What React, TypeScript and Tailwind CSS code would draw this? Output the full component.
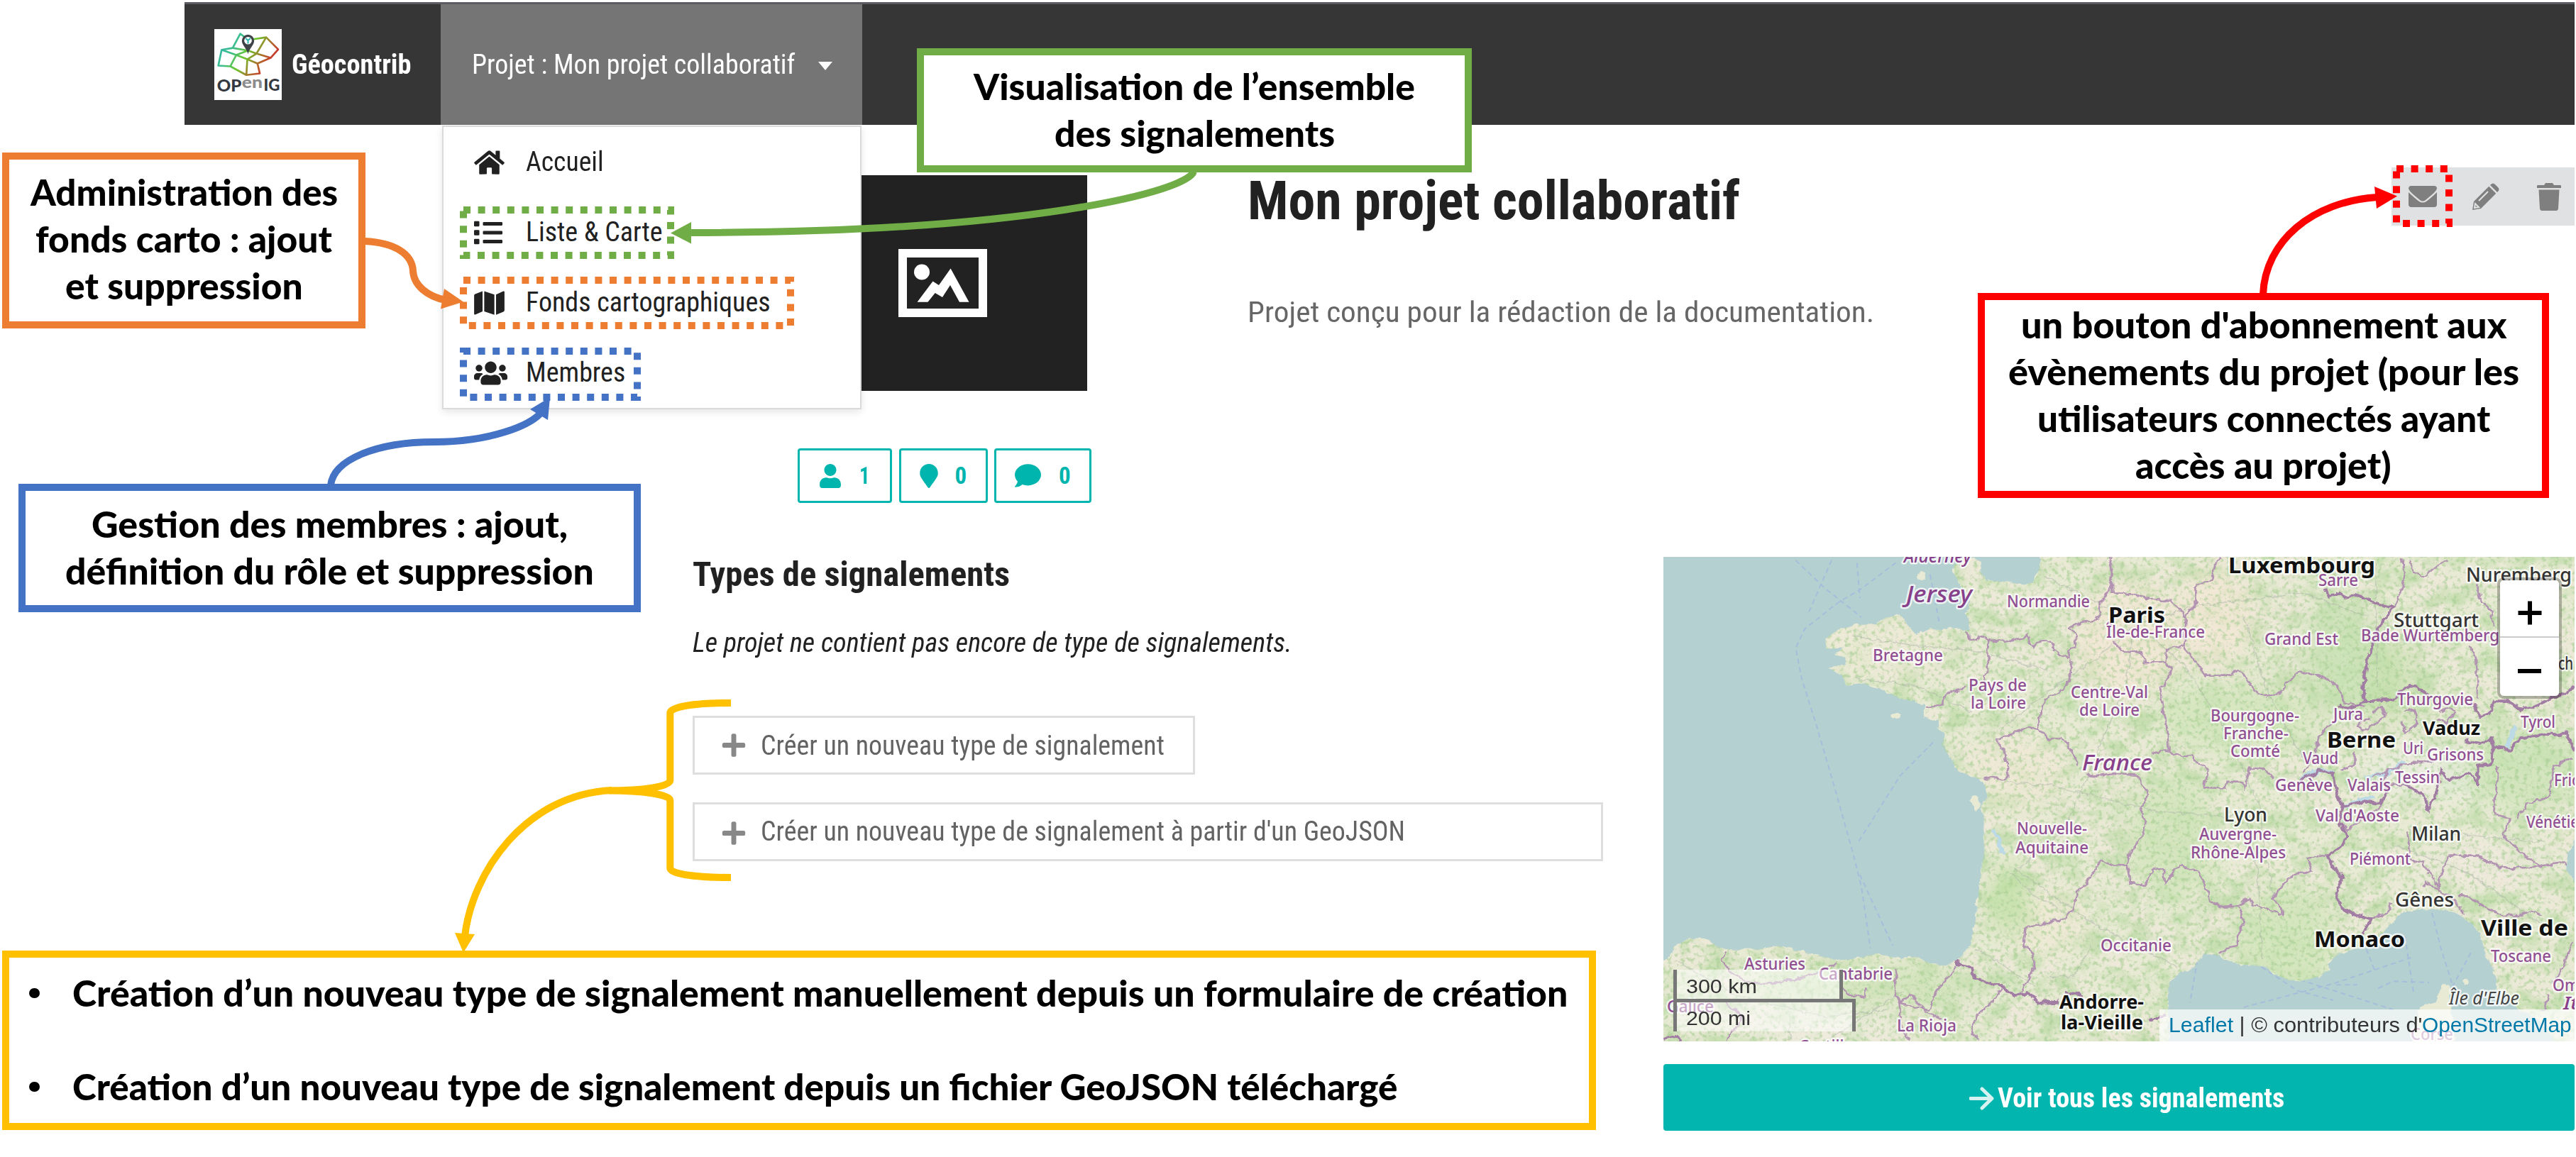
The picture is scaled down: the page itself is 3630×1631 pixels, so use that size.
import { useLayoutEffect, useRef } from "react";
import type { ReactNode } from "react";
import { FaHome, FaList, FaMap, FaUsers, FaUser, FaComment, FaPlus, FaMapMarker } from "react-icons/fa";

/** Single line of text whose glyphs are condensed horizontally to a given width. */
function Fit({ w, className = "", children }: { w: number; className?: string; children: ReactNode }) {
  const ref = useRef<HTMLSpanElement>(null);
  useLayoutEffect(() => {
    const fit = () => {
      const el = ref.current;
      if (el && el.offsetWidth) el.style.transform = `scaleX(${w / el.offsetWidth})`;
    };
    fit();
    document.fonts.ready.then(fit);
  }, [w]);
  return (
    <span className={"block shrink-0 whitespace-nowrap " + className} style={{ width: w }}>
      <span ref={ref} className="inline-block origin-left">
        {children}
      </span>
    </span>
  );
}

const MENU = [
  { Icon: FaHome, label: "Accueil", w: 110, icon: "w-[43px] h-[38px]" },
  { Icon: FaList, label: "Liste & Carte", w: 193, icon: "w-[40px] h-[40px]" },
  { Icon: FaMap, label: "Fonds cartographiques", w: 345, icon: "w-[43px] h-[38px]" },
  { Icon: FaUsers, label: "Membres", w: 140, icon: "w-[47px] h-[38px]" },
];

function Logo() {
  return (
    <svg viewBox="67 62 286 301" preserveAspectRatio="none" className="h-[100px] w-[95px] shrink-0 bg-white">
      <defs>
        <linearGradient id="lg" x1="90" y1="100" x2="300" y2="240" gradientUnits="userSpaceOnUse">
          <stop offset="0" stopColor="#2bb3b0" />
          <stop offset="0.3" stopColor="#3fbf8a" />
          <stop offset="0.52" stopColor="#6cc72e" />
          <stop offset="0.8" stopColor="#b5602a" />
          <stop offset="1" stopColor="#d3202c" />
        </linearGradient>
      </defs>
      <g fill="none" stroke="url(#lg)" strokeWidth="8" strokeLinejoin="round">
        <path d="M98 150 L145 142 L177 82 L212 108 L287 97 L338 148 L306 184 L250 208 L260 250 L203 257 L135 220 L84 217 Z" />
        <path d="M98 150 L160 172 L135 220 M160 172 L210 153 L246 166 L287 97 M246 166 L306 184 M246 166 L207 190 L160 172 M207 190 L203 257 M207 190 L250 208 M145 142 L210 153" />
      </g>
      <path d="M210 168 C205 146 184 130 184 112 A26 27 0 0 1 236 112 C236 130 215 146 210 168 Z" fill="#3f4348" />
      <circle cx="210" cy="111" r="16" fill="#fff" />
      <path d="M200 101 L210 110 L220 101 M210 110 V124" stroke="#2bb3b0" strokeWidth="6" fill="none" />
      <g fontFamily="Lato, sans-serif" fontWeight="900" fontSize="70">
        <text x="78" y="326" textLength="104" lengthAdjust="spacingAndGlyphs" fill="#34383f">OP</text>
        <text x="184" y="312" textLength="88" lengthAdjust="spacingAndGlyphs" fill="#8b8b8b">en</text>
        <text x="276" y="325" textLength="69" lengthAdjust="spacingAndGlyphs" fill="#34383f">IG</text>
      </g>
    </svg>
  );
}

const LAND =
  "M1325 30 L1312 110 L1296 150 L1270 165 L1200 150 L1140 145 L1122 110 L1118 65 L1090 50 L1050 58 L1030 80 L1032 120 L1058 180 L1085 230 L1070 290 L1085 352 L1060 358 L1020 342 L990 358 L950 348 L905 378 L875 335 L850 292 L800 302 L770 330 L700 333 L640 355 L600 390 L602 435 L660 428 L632 460 L665 470 L670 500 L610 515 L655 545 L670 592 L710 575 L780 600 L850 645 L935 665 L928 720 L985 737 L975 768 L1002 795 L987 840 L1020 900 L1042 950 L1130 992 L1142 1060 L1120 1100 L1130 1160 L1130 1290 L1116 1430 L1105 1560 L1085 1690 L1050 1740 L1000 1775 L950 1765 L900 1735 L850 1748 L770 1722 L700 1745 L640 1752 L560 1725 L500 1710 L440 1690 L380 1702 L270 1705 L235 1692 L205 1662 L140 1660 L88 1700 L80 1740 L50 1757 L50 2110 L1749 2110 L1746 1900 L1752 1840 L1790 1800 L1835 1782 L1862 1728 L1892 1720 L1930 1745 L1990 1768 L2075 1778 L2090 1800 L2150 1835 L2200 1838 L2250 1820 L2285 1795 L2280 1760 L2330 1718 L2440 1670 L2490 1600 L2530 1550 L2600 1533 L2700 1543 L2768 1600 L2795 1650 L2808 1720 L2842 1810 L2850 1880 L2890 1900 L2920 1960 L2990 2000 L3050 2110 L3120 2110 L3120 1440 L3080 1370 L3085 1300 L3120 1210 L3120 30 Z";

const BORDERS =
  "M1072 358 L1085 395 L1105 402 L1115 383 L1140 390 L1200 405 L1250 390 L1275 378 L1295 425 L1330 400 L1355 405 L1365 440 L1390 460 L1415 478 M1143 390 L1145 530 L1130 540 L1128 570 M1070 590 L1055 610 L1000 625 L990 665 L940 680 M1552 46 L1560 120 L1550 190 L1520 240 L1520 290 L1500 315 L1460 320 L1420 345 L1440 380 L1435 430 L1412 440 L1418 480 M1425 485 L1415 570 L1385 620 L1335 645 L1325 700 L1308 765 L1250 780 L1215 800 L1172 812 L1200 880 L1215 970 L1200 990 L1150 978 L1135 990 M1308 765 L1350 820 L1390 805 L1430 880 L1445 925 M1470 965 L1500 970 L1560 962 M1556 60 L1560 200 L1600 200 L1700 225 L1760 230 L1805 300 L1840 240 L1840 170 L1890 140 L1905 80 L1925 50 M1805 300 L1800 420 L1740 435 L1735 490 L1670 490 L1655 450 L1590 440 L1565 400 M1800 425 L1830 470 L1870 545 L1950 545 L1980 525 L2010 560 L2030 610 L2075 640 L2130 615 L2140 580 L2190 530 L2270 555 L2320 600 L2335 660 L2400 680 M1735 490 L1755 520 L1740 590 L1720 600 L1730 700 L1745 780 L1748 865 L1800 890 L1830 880 L1850 920 L1880 950 L1870 1020 L1940 1025 L1945 995 L1995 1000 L2000 1025 L2020 935 L2065 940 L2100 990 M1748 865 L1690 880 M1560 960 L1640 965 L1680 1050 L1655 1110 L1670 1160 L1660 1230 L1620 1290 L1610 1345 M1520 1325 L1560 1345 L1610 1350 L1620 1430 L1670 1430 L1700 1360 L1730 1370 L1735 1430 L1770 1370 L1790 1350 L1850 1380 L1870 1430 L1890 1500 L1920 1525 L1980 1520 L2005 1590 L1980 1640 L1975 1690 L1940 1700 L1920 1730 M1980 1520 L2000 1500 L2020 1490 L2030 1515 L2060 1530 L2130 1560 L2130 1530 L2095 1490 L2130 1430 L2170 1390 L2230 1370 L2210 1320 L2280 1305 M2530 46 L2540 120 L2525 200 L2500 260 M2550 60 L2570 110 L2600 130 L2630 100 L2680 60 M2780 160 L2790 220 L2830 280 L2840 340 M2760 420 L2780 500 L2785 640 M2300 740 L2250 810 L2240 880 L2200 960 M2480 950 L2460 1010 L2545 1010 M2430 700 L2460 680 L2475 720 L2440 750 L2400 780 L2380 760 L2420 730 M2540 700 L2570 690 L2580 750 L2540 790 L2530 740 M2650 700 L2690 680 L2710 700 L2680 750 L2650 730 M2370 870 L2370 920 L2330 950 M2430 980 L2480 950 L2540 920 L2600 915 L2640 900 M2545 1210 L2560 1330 L2600 1340 L2650 1440 L2670 1350 L2690 1310 L2780 1310 L2860 1360 L2960 1360 L3000 1350 L3060 1340 L3108 1350 M2850 930 L2840 1130 L2890 1150 L2870 1220 L2920 1290 L3000 1360 M2600 1440 L2610 1420 L2650 1450 L2700 1490 L2740 1560 M2720 1480 L2750 1480 L2800 1520 L2860 1560 L2920 1560 L2960 1545 L3000 1560 M3100 900 L3040 930 L3020 1060 L2950 1090 L2920 1150 M2430 1570 L2480 1550 L2490 1510 M3100 1680 L3070 1770 L3040 1850 M3020 1900 L3010 1960 L2990 1960 M1250 1890 L1300 1780 L1295 1720 L1265 1690 L1270 1610 L1400 1580 L1430 1540 L1440 1470 L1500 1380 L1520 1325 M1040 1770 L1000 1840 L970 1880 L950 1960 L900 1950 L850 1930 L880 1900 L920 1940 L940 1970 L990 2000 M840 1790 L830 1880 L850 1930 L850 2010 L880 2090 M1190 1870 L1160 1920 L1110 1980 L1090 2050 L1110 2090 M265 1715 L250 1750 L290 1810 L340 1845 L430 1850 L560 1810 L640 1760 M270 1930 L320 1990 L270 2090 M650 1860 L690 1905 L735 1900 L735 1870 M2320 1160 L2345 1200 L2400 1150 L2460 1100";

const STRONG_BORDERS =
  "M2275 180 L2285 210 L2320 200 L2340 215 L2390 205 L2420 235 L2500 260 L2450 350 L2430 420 L2410 500 L2400 600 L2410 655 L2350 690 L2320 670 M2410 655 L2500 650 L2530 610 L2560 590 L2590 610 L2620 630 M2720 640 L2760 650 L2790 720 L2830 700 L2840 655 L2880 655 L2930 690 L2990 670 L3020 650 L3108 600 M2190 990 L2250 950 L2300 960 L2310 1040 L2330 1100 L2400 1080 L2460 1090 L2480 1020 M2545 1010 L2600 1050 L2620 1115 L2650 1020 L2660 950 L2690 985 L2760 960 L2785 1010 L2780 930 L2830 920 L2835 850 L2890 860 L2930 810 L3000 800 L3080 790 L3108 860 M2740 820 L2790 840 L2830 815 L2835 850 M2330 1100 L2320 1160 L2345 1230 L2330 1270 L2280 1310 L2300 1360 L2330 1400 L2310 1470 L2320 1520 L2370 1560 L2430 1570 L2400 1635 M1035 1750 L1050 1770 L1090 1780 L1100 1830 L1190 1860 L1230 1900 L1280 1890 L1310 1930 L1380 1925 M1400 1885 L1460 1900 M1680 2010 L1740 1985 M58 2085 L100 2070 L118 2090";

const ROADS =
  "M1640 330 L1500 480 L1340 620 L1180 780 M1640 330 L1800 500 L1950 800 L2050 1100 L2100 1500 M1640 330 L1850 250 L2200 200 L2420 300 M1640 330 L1450 200 L1330 130 M1640 330 L1600 600 L1500 900 L1400 1200 L1240 1370 M1200 1000 L1350 1010 L1700 1120 L2010 1150 M1240 1370 L1500 1600 L1780 1780 M2010 1150 L2050 1400 L2060 1750 M690 380 L900 420 L1100 440 L1340 520 M700 560 L900 590 L1090 700 M1220 1380 L1300 1480 L1420 1560 M1100 1700 L1300 1860 M2440 60 L2450 600 M2500 400 L2900 380 M2500 1260 L2750 1380 L3000 1600 M2550 1200 L3000 1250 M100 1750 L300 1900 L600 1990 L800 1960 M480 1980 L480 2090 M620 2080 L860 1880 M1490 1690 L1430 1820 L1350 1820 M2000 300 L2080 620 L2200 900";

const FERRY =
  "M835 70 L720 180 L640 240 L530 350 L500 430 L520 560 L570 760 L630 1020 L690 1290 L720 1440 L750 1700 M715 1390 L770 1540 L825 1690 M500 60 L600 180 L720 300 M620 60 L540 290 M705 70 L715 220 M950 120 L980 320 M960 830 L850 970 L710 1250 M2630 1550 L2660 1700 L2700 1860 M1845 1750 L1820 1930 M2400 1670 L2440 1800 M2060 1780 L2180 1880 L2300 1920 M2310 1855 L2380 1855 M2450 1870 L2500 1840 L2620 1845 M2760 1720 L2700 1860 M2080 1790 L2500 1960 M2000 1950 L2300 1850 L2560 1740 M2540 1650 L2570 1900";

type Label = [string, number, number, number, number, string];
const P = "fill-[#914f93] font-medium";
const PI = "fill-[#87408a] italic font-medium";
const B = "fill-[#111] font-bold";
const C = "fill-[#333] font-medium";
const LABELS: Label[] = [
  ["Alderney", 2683, 793, 95, 26, PI],
  ["Jersey", 2686, 849, 93, 33, PI],
  ["Normandie", 2828, 856, 117, 23, P],
  ["Bretagne", 2639, 932, 99, 23, P],
  ["Pays de", 2774, 974, 82, 23, P],
  ["la Loire", 2777, 999, 78, 23, P],
  ["Centre-Val", 2918, 984, 109, 23, P],
  ["de Loire", 2930, 1009, 85, 23, P],
  ["France", 2934, 1086, 99, 30, PI],
  ["Île-de-France", 2968, 899, 139, 23, P],
  ["Paris", 2971, 878, 80, 30, B],
  ["Luxembourg", 3140, 808, 207, 30, B],
  ["Sarre", 3267, 826, 56, 23, P],
  ["Nuremberg", 3475, 820, 149, 27, C],
  ["Stuttgart", 3373, 884, 120, 27, C],
  ["Bade Wurtemberg", 3327, 904, 195, 23, P],
  ["Grand Est", 3191, 909, 104, 23, P],
  ["ch", 3605, 944, 21, 26, C],
  ["Thurgovie", 3378, 994, 107, 23, P],
  ["Jura", 3288, 1015, 42, 23, P],
  ["Bourgogne-", 3115, 1017, 125, 23, P],
  ["Franche-", 3133, 1042, 92, 23, P],
  ["Comté", 3143, 1067, 70, 23, P],
  ["Berne", 3279, 1054, 97, 30, B],
  ["Vaduz", 3414, 1036, 81, 26, B],
  ["Tyrol", 3552, 1026, 49, 23, P],
  ["Uri", 3386, 1063, 29, 23, P],
  ["Grisons", 3420, 1072, 80, 23, P],
  ["Vaud", 3245, 1077, 50, 23, P],
  ["Tessin", 3375, 1104, 63, 23, P],
  ["Genève", 3206, 1115, 81, 23, P],
  ["Valais", 3308, 1115, 61, 23, P],
  ["Frioul", 3599, 1108, 56, 23, P],
  ["Lyon", 3134, 1158, 61, 27, C],
  ["Val d'Aoste", 3263, 1158, 118, 23, P],
  ["Milan", 3398, 1185, 70, 27, C],
  ["Vénétie", 3560, 1167, 74, 23, P],
  ["Auvergne-", 3099, 1184, 109, 23, P],
  ["Rhône-Alpes", 3087, 1210, 134, 23, P],
  ["Piémont", 3311, 1219, 86, 23, P],
  ["Nouvelle-", 2842, 1176, 99, 23, P],
  ["Aquitaine", 2840, 1203, 103, 23, P],
  ["Gênes", 3375, 1278, 83, 27, C],
  ["Monaco", 3261, 1335, 128, 30, B],
  ["Ville de", 3496, 1319, 123, 30, B],
  ["Toscane", 3510, 1356, 85, 23, P],
  ["Île d'Elbe", 3451, 1416, 99, 25, "fill-[#444] italic"],
  ["Ombrie", 3597, 1397, 78, 23, P],
  ["Italia", 3612, 1423, 72, 26, PI],
  ["Occitanie", 2960, 1341, 100, 23, P],
  ["Andorre-", 2902, 1422, 119, 26, B],
  ["la-Vieille", 2904, 1451, 116, 26, B],
  ["Asturies", 2458, 1367, 86, 23, P],
  ["Cantabrie", 2563, 1381, 104, 23, P],
  ["Galice", 2349, 1427, 66, 23, P],
  ["La Rioja", 2673, 1454, 84, 23, P],
  ["Castille", 2535, 1483, 76, 23, P],
  ["Corse", 3397, 1466, 60, 23, P],
];

function FranceMap() {
  return (
    <svg viewBox="2344 785 1284 683" className="block h-[683px] w-[1284px]">
      <defs>
        <clipPath id="land">
          <path d={LAND} transform="translate(2320 770) scale(.4209 .3333)" />
        </clipPath>
        <filter id="rough" x="-5%" y="-5%" width="110%" height="110%">
          <feTurbulence type="fractalNoise" baseFrequency="0.09" numOctaves="3" seed="4" />
          <feDisplacementMap in="SourceGraphic" scale="9" xChannelSelector="R" yChannelSelector="G" />
        </filter>
        <filter id="forest" x="0" y="0" width="100%" height="100%" colorInterpolationFilters="sRGB">
          <feTurbulence type="fractalNoise" baseFrequency="0.03 0.035" numOctaves="6" seed="11" />
          <feColorMatrix values="0 0 0 0 0.68  0 0 0 0 0.84  0 0 0 0 0.59  3.4 0 0 0 -1.5" />
        </filter>
        <filter id="fields" x="0" y="0" width="100%" height="100%" colorInterpolationFilters="sRGB">
          <feTurbulence type="fractalNoise" baseFrequency="0.16" numOctaves="4" seed="23" />
          <feColorMatrix values="0 0 0 0 0.64  0 0 0 0 0.8  0 0 0 0 0.56  0 4 0 0 -2" />
        </filter>
        <filter id="plains" x="0" y="0" width="100%" height="100%" colorInterpolationFilters="sRGB">
          <feTurbulence type="fractalNoise" baseFrequency="0.02" numOctaves="5" seed="31" />
          <feColorMatrix values="0 0 0 0 0.95  0 0 0 0 0.91  0 0 0 0 0.87  0 0 4 0 -1.7" />
        </filter>
        <filter id="soft" x="-50%" y="-50%" width="200%" height="200%">
          <feGaussianBlur stdDeviation="16" />
        </filter>
      </defs>
      <rect x="2344" y="785" width="1284" height="683" fill="#b5d0d0" />
      <g transform="translate(2320 770) scale(.4209 .3333)">
        <path d={FERRY} fill="none" stroke="#a2b8dd" strokeWidth="2" strokeDasharray="7 5" strokeOpacity=".8" vectorEffect="non-scaling-stroke" />
      </g>
      <g filter="url(#rough)">
        <path d={LAND} transform="translate(2320 770) scale(.4209 .3333)" fill="#e8ead4" />
        <g fill="#e8ead4">
          <ellipse cx="2671" cy="1009" rx="7" ry="5" />
          <ellipse cx="2708" cy="811" rx="6" ry="5" />
          <ellipse cx="2784" cy="1131" rx="6" ry="10" />
          <path d="M3408 1422 L3434 1412 L3441 1388 L3450 1386 L3453 1412 L3460 1468 L3400 1468 Z" />
          <ellipse cx="3474" cy="1384" rx="4" ry="4" />
        </g>
      </g>
      <g clipPath="url(#land)">
        <rect x="2344" y="785" width="1284" height="683" filter="url(#plains)" opacity=".5" />
        <rect x="2344" y="785" width="1284" height="683" filter="url(#forest)" opacity=".55" />
        <g filter="url(#soft)" opacity=".75">
          <ellipse cx="3000" cy="900" rx="75" ry="80" fill="#f3e6d4" />
          <ellipse cx="3120" cy="870" rx="55" ry="70" fill="#f3e6d4" />
          <ellipse cx="2880" cy="1300" rx="60" ry="45" fill="#f0e9d5" />
          <ellipse cx="2840" cy="1090" rx="70" ry="50" fill="#f0e8d6" />
          <ellipse cx="2660" cy="910" rx="90" ry="50" fill="#efead8" />
          <ellipse cx="3500" cy="1215" rx="110" ry="30" fill="#f1eae0" />
          <ellipse cx="3470" cy="1090" rx="150" ry="35" fill="#edeee4" />
          <ellipse cx="2830" cy="1270" rx="30" ry="50" fill="#bfe0a3" />
          <ellipse cx="3060" cy="1180" rx="60" ry="90" fill="#cfe4b8" />
          <ellipse cx="3300" cy="930" rx="50" ry="90" fill="#c5e0b0" />
          <ellipse cx="3370" cy="960" rx="30" ry="60" fill="#bfdea6" />
          <ellipse cx="3150" cy="1010" rx="110" ry="50" fill="#d0e5ba" />
          <ellipse cx="3560" cy="1080" rx="90" ry="60" fill="#cbe3b6" />
          <ellipse cx="3220" cy="1330" rx="70" ry="80" fill="#cde4b6" />
          <ellipse cx="2640" cy="1390" rx="170" ry="30" fill="#cfe3b8" />
          <ellipse cx="2560" cy="1450" rx="120" ry="22" fill="#f1ece2" />
        </g>
        <rect x="2344" y="785" width="1284" height="683" filter="url(#fields)" opacity=".6" />
        <g filter="url(#rough)" fill="none">
          <g transform="translate(2320 770) scale(.4209 .3333)">
            <path d={ROADS} stroke="#a9b3a8" strokeOpacity=".5" strokeWidth="1.5" vectorEffect="non-scaling-stroke" />
            <path d="M2190 990 Q2250 930 2300 960 M2410 980 L2480 960 L2540 910 M2330 1100 L2440 1060 M1165 1200 L1195 1300 M2880 850 L2910 760" stroke="#bcd9e6" strokeWidth="6" vectorEffect="non-scaling-stroke" />
            <path d={BORDERS} stroke="#b393b2" strokeWidth="2.6" vectorEffect="non-scaling-stroke" />
            <path d={STRONG_BORDERS} stroke="#a27da3" strokeWidth="4" vectorEffect="non-scaling-stroke" />
          </g>
        </g>
      </g>
      <g className="font-['Noto_Sans'] [font-stretch:normal]">
        {LABELS.map(([t, x, y, w, s, c]) => (
          <text
            key={t + x}
            x={x}
            y={y}
            textLength={w}
            lengthAdjust="spacingAndGlyphs"
            fontSize={s}
            className={c}
            stroke="#ffffff"
            strokeOpacity=".75"
            strokeWidth="5"
            strokeLinejoin="round"
            paintOrder="stroke"
          >
            {t}
          </text>
        ))}
      </g>
    </svg>
  );
}

function MapPanel() {
  return (
    <div className="relative h-[683px] w-[1284px] overflow-hidden font-['Liberation_Sans']">
      <FranceMap />
      <div className="absolute right-[18px] top-[29px] flex h-[171px] w-[91px] flex-col overflow-hidden rounded-[9px] border-[4px] border-black/25 bg-white bg-clip-padding">
        <div className="flex h-[81px] items-center justify-center border-b-2 border-[#ccc] pt-[12px]">
          <svg viewBox="0 0 34 34" className="h-[34px] w-[34px]">
            <path d="M17 0.5 V33.5 M0.5 17 H33.5" stroke="#000" strokeWidth="6" />
          </svg>
        </div>
        <div className="flex flex-1 items-center justify-center pt-[12px]">
          <div className="h-[6px] w-[33px] bg-black" />
        </div>
      </div>
      <div className="absolute bottom-[14px] left-[14px] text-[28px] text-[#333]">
        <div className="h-[46px] w-[239px] border-x-[5px] border-b-[5px] border-[#777] bg-white/50 pl-[13px] leading-[47px]">
          <Fit w={100}>300 km</Fit>
        </div>
        <div className="-mt-[5px] h-[46px] w-[257px] border-x-[5px] border-t-[5px] border-[#777] bg-white/50 pl-[13px] leading-[46px]">
          <Fit w={91}>200 mi</Fit>
        </div>
      </div>
      <div className="absolute bottom-0 right-0 flex h-[45px] w-[585px] bg-white/70 pl-[13px] text-[29px] leading-[45px] text-[#333]">
        <Fit w={91} className="text-[#0078a8]">Leaflet</Fit>
        <Fit w={266}><span className="whitespace-pre"> | © contributeurs d'</span></Fit>
        <Fit w={211} className="text-[#0078a8]">OpenStreetMap</Fit>
      </div>
    </div>
  );
}

function Callout({ box, lines }: { box: string; lines: [string, number][] }) {
  return (
    <div className={"absolute flex flex-col items-center border-[10px] bg-white font-[Lato] text-[51px] font-black leading-[66px] text-black " + box}>
      {lines.map(([t, w]) => (
        <Fit key={t} w={w}>{t}</Fit>
      ))}
    </div>
  );
}

function Connectors() {
  return (
    <svg viewBox="0 0 3630 1631" className="pointer-events-none absolute inset-0 h-[1631px] w-[3630px]">
      <g fill="none" strokeWidth="10">
        <g strokeDasharray="10 10.6">
          <rect x="653" y="296" width="292" height="64" stroke="#70ad47" />
          <rect x="653" y="395" width="461" height="64" stroke="#ed7d31" />
          <rect x="653" y="495" width="245" height="65" stroke="#4472c4" />
          <rect x="3377" y="238" width="74" height="77" stroke="#ff0000" />
        </g>
        <path d="M1682 242 C1672 270 1450 328 970 328" stroke="#70ad47" />
        <path d="M514 340 C556 342 581 358 582 382 C583 402 602 418 628 423" stroke="#ed7d31" />
        <path d="M466 684 C470 648 530 623 612 623 C690 623 748 600 764 580" stroke="#4472c4" />
        <path d="M3189 415 C3192 340 3258 284 3350 278" stroke="#ff0000" />
        <path d="M1030 991 C980 991 944.300 996 944.300 1005 V1100 C944.300 1109 905 1114.500 858 1114.500 C905 1114.500 944.300 1120 944.300 1128 V1224 C944.300 1232 980 1237 1030 1237" stroke="#ffc000" />
        <path d="M862 1114 C740 1120 665 1230 655 1320" stroke="#ffc000" />
      </g>
      <path d="M945 328.400 L974 313 L974 343.500 Z" fill="#70ad47" />
      <path d="M653 425.500 L626 407 L621 435.500 Z" fill="#ed7d31" />
      <path d="M775 560 L747 577 L772 592 Z" fill="#4472c4" />
      <path d="M3378 276.500 L3346 263 L3349 294 Z" fill="#ff0000" />
      <path d="M653 1343 L641 1315 L669 1317 Z" fill="#ffc000" />
    </svg>
  );
}

function Badge({ box, pad, children }: { box: string; pad: string; children: ReactNode }) {
  return (
    <div className={"flex h-[77px] items-center rounded-[4px] border-[3px] border-[#00b5ad] text-[33px] font-bold text-[#00b5ad] " + box + " " + pad}>
      {children}
    </div>
  );
}

export default function App() {
  return (
    <div className="relative h-[1631px] w-[3630px] overflow-hidden bg-white pt-[3px] font-['Roboto_Condensed',Roboto,sans-serif] text-[38px] text-[#212121] [font-stretch:75%]">
      <header className="ml-[260px] flex h-[173px] w-[3368px] border-t-[3px] border-[#5b5b62] bg-[#363636] text-white">
        <div className="flex w-[361px] items-center pl-[42px]">
          <Logo />
          <Fit w={168} className="ml-[14px] text-[39px] font-bold">Géocontrib</Fit>
        </div>
        <div className="relative flex w-[594px] items-center bg-[#757575] pl-[44px]">
          <Fit w={456}>Projet : Mon projet collaboratif</Fit>
          <svg viewBox="0 0 20 12" className="ml-[32px] mt-[3px] h-[12px] w-[20px] fill-white">
            <path d="M0 0 H20 L10 12 Z" />
          </svg>
          <nav className="absolute left-[2px] top-[171px] z-10 flex h-[400px] w-[591px] flex-col border-2 border-[#d9dadb] bg-white text-[#212121] shadow-[0_4px_10px_rgba(0,0,0,0.1)]">
            {MENU.map(({ Icon, label, w, icon }) => (
              <div key={label} className="flex h-[99px] items-center pl-[43px]">
                <div className="flex w-[73px] items-center">
                  <Icon className={icon} preserveAspectRatio="xMidYMid meet" />
                </div>
                <Fit w={w}>{label}</Fit>
              </div>
            ))}
          </nav>
        </div>
      </header>

      <section className="ml-[1124px] flex h-[609px] w-[2504px]">
        <div className="w-[634px] pt-[71px]">
          <div className="flex h-[304px] w-[408px] items-center justify-center bg-[#222]">
            <svg viewBox="1266 351 125 96" className="h-[96px] w-[125px]">
              <path d="M1266 351 H1391 V447 H1266 Z M1278 363 V435 H1379 V363 Z" fill="#fff" fillRule="evenodd" />
              <circle cx="1299" cy="383.500" r="11" fill="#fff" />
              <path d="M1292.600 425.700 L1314.500 396.500 L1323 402 L1339.600 378.500 L1365.500 425.700 H1352 L1339 402 L1328 419 L1317.700 413 L1307.500 425.700 Z" fill="#fff" />
            </svg>
          </div>
          <div className="mt-[81px] flex w-[414px] justify-between">
            <Badge box="w-[133px]" pad="pl-[26px]">
              <FaUser className="h-[34px] w-[34px]" />
              <Fit w={15} className="ml-[24px]">1</Fit>
            </Badge>
            <Badge box="w-[125px]" pad="pl-[26px]">
              <FaMapMarker className="h-[34px] w-[26px]" />
              <Fit w={17} className="ml-[24px]">0</Fit>
            </Badge>
            <Badge box="w-[137px]" pad="pl-[26px]">
              <FaComment className="h-[37px] w-[37px]" />
              <Fit w={17} className="ml-[25px]">0</Fit>
            </Badge>
          </div>
        </div>
        <div className="flex-1 pt-[57px]">
          <h1 className="text-[76px] font-bold leading-[100px]">
            <Fit w={694}>Mon projet collaboratif</Fit>
          </h1>
          <p className="mt-[77px] text-[41px] leading-[60px] text-[#666]">
            <Fit w={883}>Projet conçu pour la rédaction de la documentation.</Fit>
          </p>
        </div>
        <div className="mt-[60px] flex h-[82px] w-[258px] items-center bg-[#e0e1e2] pl-[24px] text-[#7f7f7f]">
          <svg viewBox="0 0 40 30" className="h-[30px] w-[40px] fill-current">
            <path d="M4 0 H36 Q40 0 40 4 C38 9 30 15 24 20 Q20 23 16 20 C10 15 2 9 0 4 Q0 0 4 0 Z M0 9 C5 14 11 19 15 22 Q20 25 25 22 C29 19 35 14 40 9 V26 Q40 30 36 30 H4 Q0 30 0 26 Z" />
          </svg>
          <svg viewBox="0 0 39 39" className="ml-[49px] h-[39px] w-[39px]">
            <path d="M3 26 L25 4 L35 14 L13 36 L1 38 Z" fill="#7f7f7f" />
            <path d="M27 2 Q30 -1 33 2 L37 6 Q40 9 37 12 L36 13 L26 3 Z" fill="#7f7f7f" />
            <path d="M24.500 3.500 L35.500 14.500 M10 25 L23 12 M4 35 L5 29 L10 34 Z" stroke="#e0e1e2" strokeWidth="2" fill="none" />
          </svg>
          <svg viewBox="0 0 34 39" className="ml-[53px] h-[39px] w-[34px] fill-current">
            <path d="M1 3 H10 L12 0 H22 L24 3 H33 Q34 3 34 4 V7 H0 V4 Q0 3 1 3 Z M2.500 9.500 H31.500 L30 36 Q29.500 39 27 39 H7 Q4.500 39 4 36 Z" />
          </svg>
        </div>
      </section>

      <section className="ml-[976px] flex gap-[85px]">
        <div className="w-[1283px]">
          <h3 className="text-[49px] font-bold leading-[50px]">
            <Fit w={447}>Types de signalements</Fit>
          </h3>
          <p className="mt-[47px] italic leading-[48px]">
            <Fit w={845}>Le projet ne contient pas encore de type de signalements.</Fit>
          </p>
          <div className="mt-[79px] flex h-[83px] w-[708px] items-center border-[3px] border-[#dedede] pl-[38px] text-[#636363]">
            <FaPlus className="h-[37px] w-[34px] text-[#888]" />
            <Fit w={569} className="ml-[21px] mt-[2px]">Créer un nouveau type de signalement</Fit>
          </div>
          <div className="mt-[39px] flex h-[83px] items-center border-[3px] border-[#dedede] pl-[38px] text-[#636363]">
            <FaPlus className="mt-[4px] h-[37px] w-[34px] text-[#888]" />
            <Fit w={908} className="ml-[21px]">Créer un nouveau type de signalement à partir d'un GeoJSON</Fit>
          </div>
        </div>
        <div className="w-[1284px]">
          <MapPanel />
          <div className="mt-[32px] flex h-[94px] items-center justify-center gap-[5px] rounded-[4px] bg-[#02b6af] pl-[21px] pt-[3px] text-[39px] font-bold text-white">
            <svg viewBox="0 0 35 33" className="h-[33px] w-[35px]">
              <path d="M2 16.500 H31 M18 3 L32 16.500 L18 30" stroke="#d6f2f1" strokeWidth="5" strokeLinecap="round" strokeLinejoin="round" fill="none" />
            </svg>
            <Fit w={404}>Voir tous les signalements</Fit>
          </div>
        </div>
      </section>

      <div className="absolute inset-0 z-20">
        <Connectors />
        <Callout
          box="left-[3px] top-[215px] h-[248px] w-[512px] border-[#ed7d31] pt-[13px]"
          lines={[["Administration des", 433], ["fonds carto : ajout", 418], ["et suppression", 335]]}
        />
        <Callout
          box="left-[1292px] top-[68px] h-[175px] w-[782px] border-[#70ad47] pt-[11px]"
          lines={[["Visualisation de l’ensemble", 622], ["des signalements", 395]]}
        />
        <Callout
          box="left-[2787px] top-[413px] h-[289px] w-[805px] border-[#ff0000] pt-[2px]"
          lines={[["un bouton d'abonnement aux", 684], ["évènements du projet (pour les", 720], ["utilisateurs connectés ayant", 638], ["accès au projet)", 361]]}
        />
        <Callout
          box="left-[26px] top-[682px] h-[181px] w-[877px] border-[#4472c4] pt-[14px]"
          lines={[["Gestion des membres : ajout,", 671], ["définition du rôle et suppression", 745]]}
        />
        <ul className="absolute left-[3px] top-[1340px] flex h-[253px] w-[2246px] flex-col gap-[66px] border-[10px] border-[#ffc000] bg-white pl-[28px] pt-[17px] font-[Lato] text-[51px] font-black leading-[66px] text-black">
          <li className="flex items-center">
            <span className="mr-[46px] h-[14px] w-[15px] rounded-full bg-black" />
            <Fit w={2107}>Création d’un nouveau type de signalement manuellement depuis un formulaire de création</Fit>
          </li>
          <li className="flex items-center">
            <span className="mr-[46px] h-[14px] w-[15px] rounded-full bg-black" />
            <Fit w={1867}>Création d’un nouveau type de signalement depuis un fichier GeoJSON téléchargé</Fit>
          </li>
        </ul>
      </div>
    </div>
  );
}
